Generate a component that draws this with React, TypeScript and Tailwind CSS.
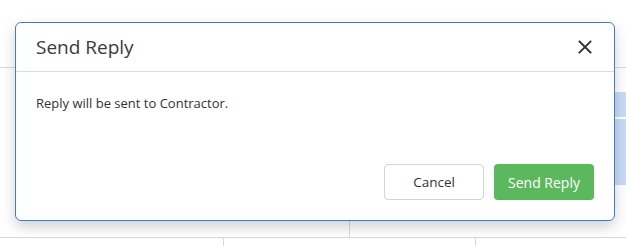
import React from "react";

export default function App() {
  return (
    <div
      className="relative w-[626px] h-[246px] overflow-hidden bg-white"
      style={{ fontFamily: '"Open Sans", "Liberation Sans", sans-serif' }}
    >
      {/* background page */}
      <div className="flex flex-col h-full">
        <div className="h-[68px] border-b border-[#d9d9d9] shrink-0" />
        <div className="h-[170px] shrink-0 flex border-b border-[#d9d9d9]">
          <div className="w-[350px] border-r border-[#d9d9d9]" />
          <div className="flex-1 flex justify-end pt-[24px]">
            <div className="flex flex-col gap-[2px]">
              <div className="w-[40px] h-[25px] rounded-l-[14px] bg-[#c8dbf6]" />
              <div className="w-[40px] h-[66px] rounded-l-[20px] rounded-bl-[30px] bg-[#c8dbf6]" />
            </div>
          </div>
        </div>
        <div className="flex-1 flex">
          <div className="w-[224px] border-r border-[#d9d9d9]" />
          <div className="w-[252px] border-r border-[#d9d9d9]" />
        </div>
      </div>

      {/* modal */}
      <div className="absolute left-[15px] top-[22px] w-[600px] h-[199px] bg-white border border-[#3b80c6] rounded-[6px] shadow-[0_6px_14px_rgba(0,0,0,0.18)] flex flex-col">
        <div className="h-[49px] shrink-0 border-b border-[#dcdcdc] flex items-center justify-between pl-[20px] pr-[22px]">
          <span className="text-[19px] text-[#3a3a3a] leading-none">Send Reply</span>
          <svg width="14" height="14" viewBox="0 0 14 14" className="text-[#333]">
            <path d="M1.5 1.5 L12.5 12.5 M12.5 1.5 L1.5 12.5" stroke="currentColor" strokeWidth="1.9" strokeLinecap="square" />
          </svg>
        </div>
        <div className="pl-[20px] pt-[22px] text-[13px] text-[#333] leading-[18px]">
          Reply will be sent to Contractor.
        </div>
        <div className="mt-auto flex justify-end gap-[10px] pr-[20px] pb-[20px]">
          <button className="w-[100px] h-[36px] border border-[#d5d5d5] rounded-[4px] bg-white text-[13.5px] text-[#333]">
            Cancel
          </button>
          <button className="w-[100px] h-[36px] rounded-[4px] bg-[#5cb85c] text-[14px] text-white">
            Send Reply
          </button>
        </div>
      </div>
    </div>
  );
}
